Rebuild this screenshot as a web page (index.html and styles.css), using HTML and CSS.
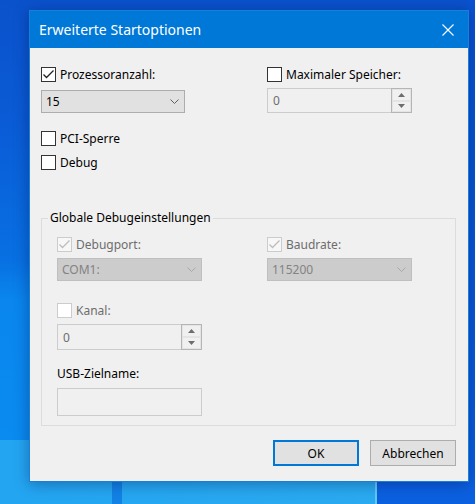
FILE: index.html
```html
<!DOCTYPE html>
<html lang="de">
<head>
<meta charset="utf-8">
<title>Erweiterte Startoptionen</title>
<link rel="stylesheet" href="styles.css">
</head>
<body>
<div class="dialog">
  <div class="titlebar">
    <span class="title">Erweiterte Startoptionen</span>
    <svg class="close" width="12" height="12" viewBox="0 0 12 12"><path d="M0.5 0.5 L11.5 11.5 M11.5 0.5 L0.5 11.5" stroke="#fff" stroke-width="1.1" fill="none"/></svg>
  </div>
  <div class="content">
    <div class="top-grid">
      <div class="check"><span class="box"><svg width="13" height="13" viewBox="0 0 13 13"><polyline points="1.5,6.5 4.5,9.5 11.5,2.5" class="tick"/></svg></span>Prozessoranzahl:</div>
      <div class="check"><span class="box"></span>Maximaler Speicher:</div>
      <div class="combo"><span>15</span><svg class="chev" width="9" height="5" viewBox="0 0 9 5"><polyline points="0.5,0.5 4.5,4.5 8.5,0.5"/></svg></div>
      <div class="spin"><span class="spin-val">0</span><div class="spin-btns"><span class="sb"><svg width="7" height="4" viewBox="0 0 7 4"><polygon points="0,4 3.5,0 7,4"/></svg></span><span class="sb"><svg width="7" height="4" viewBox="0 0 7 4"><polygon points="0,0 3.5,4 7,0"/></svg></span></div></div>
    </div>
    <div class="checks">
      <div class="check"><span class="box"></span>PCI-Sperre</div>
      <div class="check"><span class="box"></span>Debug</div>
    </div>
    <div class="group">
      <div class="group-title">Globale Debugeinstellungen</div>
      <div class="group-grid">
        <div class="check disabled"><span class="box dis"><svg width="13" height="13" viewBox="0 0 13 13"><polyline points="1.5,6.5 4.5,9.5 11.5,2.5" class="tick dis"/></svg></span>Debugport:</div>
        <div class="check disabled"><span class="box dis"><svg width="13" height="13" viewBox="0 0 13 13"><polyline points="1.5,6.5 4.5,9.5 11.5,2.5" class="tick dis"/></svg></span>Baudrate:</div>
        <div class="combo dis"><span>COM1:</span><svg class="chev" width="9" height="5" viewBox="0 0 9 5"><polyline points="0.5,0.5 4.5,4.5 8.5,0.5"/></svg></div>
        <div class="combo dis"><span>115200</span><svg class="chev" width="9" height="5" viewBox="0 0 9 5"><polyline points="0.5,0.5 4.5,4.5 8.5,0.5"/></svg></div>
      </div>
      <div class="group-col">
        <div class="check disabled kanal"><span class="box dis white"></span>Kanal:</div>
        <div class="spin tall"><span class="spin-val">0</span><div class="spin-btns"><span class="sb"><svg width="7" height="4" viewBox="0 0 7 4"><polygon points="0,4 3.5,0 7,4"/></svg></span><span class="sb"><svg width="7" height="4" viewBox="0 0 7 4"><polygon points="0,0 3.5,4 7,0"/></svg></span></div></div>
        <div class="usb-label">USB-Zielname:</div>
        <div class="textbox"></div>
      </div>
    </div>
    <div class="buttons">
      <div class="btn default">OK</div>
      <div class="btn">Abbrechen</div>
    </div>
  </div>
</div>
</body>
</html>
```
FILE: styles.css
```css
* { box-sizing: border-box; }
html, body { margin: 0; height: 100%; }
body {
  font-family: "Noto Sans", "Segoe UI", sans-serif;
  font-size: 12px;
  color: #000;
  overflow: hidden;
  padding: 10px 0 0 29px;
  background:
    linear-gradient(to right, transparent 112px, #1282e5 112px 122px, transparent 122px 375px, #62c9f5 375px 377px, #0b60e0 377px) 0 482px / 100% 22px no-repeat,
    linear-gradient(to right, #23a5f1, #2aaaf0 375px, #0b60e0 375px) 0 440px / 100% 64px no-repeat,
    linear-gradient(#0a52d2, #0a5ddc) 100% 0 / 7px 100% no-repeat,
    linear-gradient(to bottom, #0a52cc 0, #0a5bd5 120px, #0870e2 260px, #0a86ee 300px, #0a8bf0 440px) 0 0 / 100% 100% no-repeat;
}
.dialog {
  width: 440px;
  height: 472px;
  border: 1px solid #1a7fd6;
  background: #f0f0f0;
  box-shadow: 0 2px 14px rgba(0, 10, 60, 0.35);
  display: flex;
  flex-direction: column;
}
.titlebar {
  height: 37px;
  flex: none;
  background: #0078d7;
  color: #fff;
  display: flex;
  align-items: center;
  justify-content: space-between;
  padding: 0 14px 0 9px;
  font-size: 14px;
}
.close { display: block; }
.content {
  padding: 18px 12px 0 11px;
  display: flex;
  flex-direction: column;
}
.top-grid {
  display: grid;
  grid-template-columns: 226px 145px;
  align-items: start;
}
.check {
  display: flex;
  align-items: center;
  gap: 4px;
  height: 16px;
  white-space: nowrap;
}
.check.disabled { color: #6d6d6d; }
.box {
  width: 15px;
  height: 15px;
  flex: none;
  border: 1px solid #333;
  background: #fff;
  display: flex;
}
.box.dis { border-color: #cccccc; background: #f7f7f7; }
.box.white { background: #fff; }
.tick { fill: none; stroke: #222; stroke-width: 1.3; }
.tick.dis { stroke: #bdbdbd; }
.combo {
  width: 144px;
  margin-top: 8px;
  height: 23px;
  border: 1px solid #adadad;
  background: #e1e1e1;
  display: flex;
  align-items: center;
  justify-content: space-between;
  padding: 0 5px 0 4px;
}
.chev { fill: none; stroke: #606060; stroke-width: 1; display: block; }
.combo.dis { width: 145px; background: #cccccc; border-color: #bfbfbf; color: #838383; }
.combo.dis .chev { stroke: #a9a9a9; }
.spin {
  width: 145px;
  margin-top: 6px;
  height: 25px;
  border: 1px solid #cccccc;
  background: #f0f0f0;
  display: flex;
  color: #6d6d6d;
}
.spin.tall { height: 26px; }
.spin-val {
  flex: 1;
  padding-left: 5px;
  display: flex;
  align-items: center;
}
.spin-btns {
  width: 21px;
  display: flex;
  flex-direction: column;
  border: 1px solid #b5b5b5;
  margin: -1px -1px -1px 0;
}
.sb {
  flex: 1;
  display: flex;
  align-items: center;
  justify-content: center;
  border: 1px solid #e4e4e4;
}
.sb svg { fill: #6d6d6d; display: block; }
.checks {
  margin-top: 17px;
  display: flex;
  flex-direction: column;
  gap: 8px;
}
.group {
  margin-top: 48px;
  border: 1px solid #dcdcdc;
  padding: 0 0 9px 15px;
}
.group-title {
  width: max-content;
  margin: -9px 0 0 -9px;
  padding: 0 2px;
  line-height: 16px;
  background: #f0f0f0;
}
.group-grid {
  margin-top: 10px;
  display: grid;
  grid-template-columns: 210px 145px;
  align-items: start;
}
.group-grid .combo { margin-top: 6px; }
.group-col {
  width: 145px;
  display: flex;
  flex-direction: column;
}
.kanal { margin-top: 21px; }
.usb-label {
  margin-top: 16px;
  line-height: 16px;
}
.textbox {
  margin-top: 6px;
  height: 28px;
  border: 1px solid #cccccc;
  background: #f0f0f0;
}
.buttons {
  margin-top: 14px;
  display: flex;
  justify-content: flex-end;
  gap: 11px;
}
.btn {
  width: 86px;
  height: 26px;
  border: 1px solid #adadad;
  background: #e1e1e1;
  display: flex;
  align-items: center;
  justify-content: center;
}
.btn.default { border: 2px solid #0078d7; }
```
